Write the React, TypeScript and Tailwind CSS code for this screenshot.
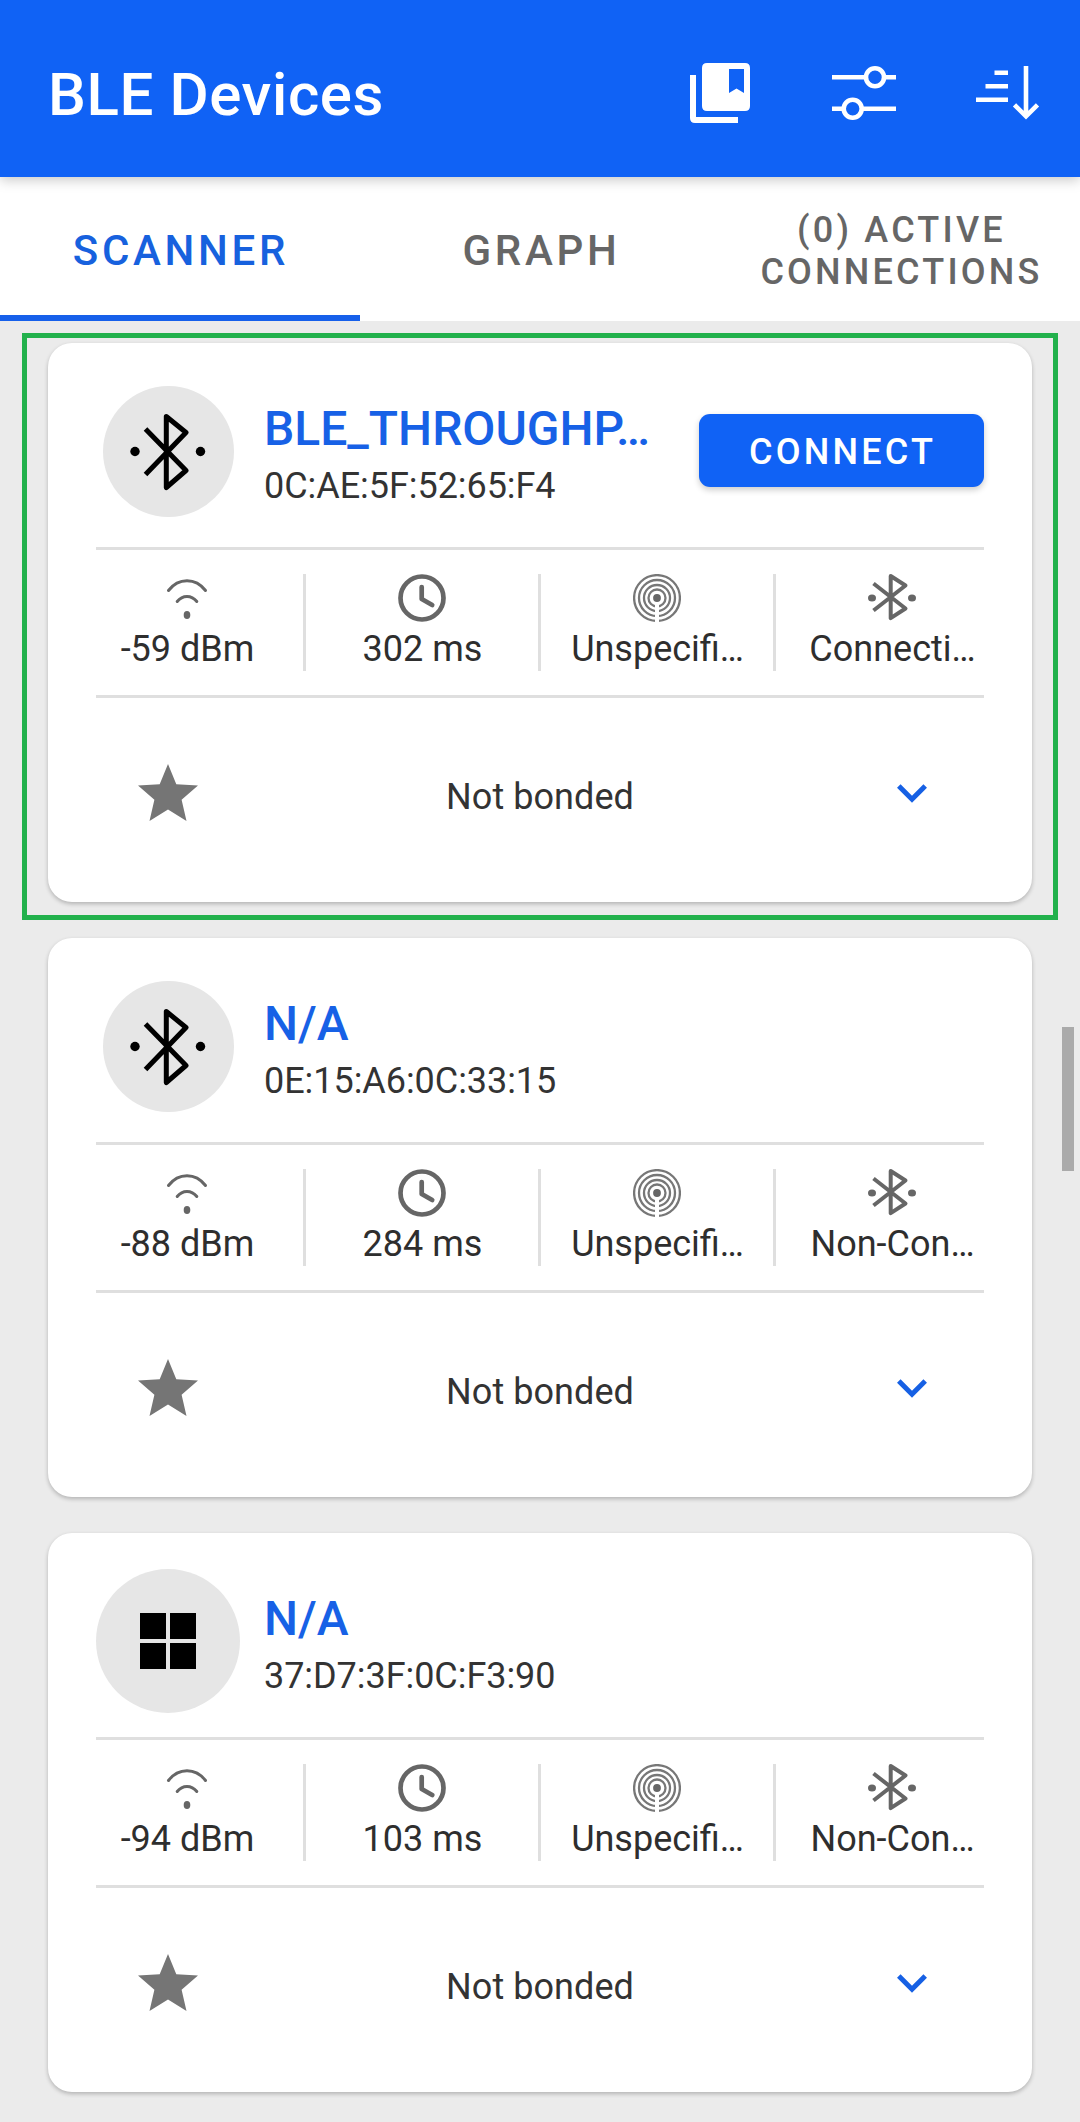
import React from "react";

type Device = {
  name: string;
  address: string;
  rssi: string;
  interval: string;
  kind: string;
  mode: string;
  logo: "ble" | "windows";
  connectable?: boolean;
};

const devices: Device[] = [
  { name: "BLE_THROUGHP…", address: "0C:AE:5F:52:65:F4", rssi: "-59 dBm", interval: "302 ms", kind: "Unspecifi…", mode: "Connecti…", logo: "ble", connectable: true },
  { name: "N/A", address: "0E:15:A6:0C:33:15", rssi: "-88 dBm", interval: "284 ms", kind: "Unspecifi…", mode: "Non-Con…", logo: "ble" },
  { name: "N/A", address: "37:D7:3F:0C:F3:90", rssi: "-94 dBm", interval: "103 ms", kind: "Unspecifi…", mode: "Non-Con…", logo: "windows" },
];

function BookmarksIcon() {
  return (
    <svg width="60" height="60" viewBox="0 0 60 60" fill="#fff">
      <path d="M0 12h6v42h42v6H5q-5 0-5-5z" />
      <path fillRule="evenodd" d="M17 0h38q5 0 5 5v38q0 5-5 5H17q-5 0-5-5V5q0-5 5-5zM39 6v24l7.500-4.500L54 30V6z" />
    </svg>
  );
}

function FilterIcon() {
  return (
    <svg width="64" height="54" viewBox="0 0 64 54" fill="none" stroke="#fff" strokeWidth="4.600">
      <path d="M0 11.300h33M53 11.300h11M0 42.700h11M31 42.700h33" />
      <circle cx="43" cy="11.300" r="9" />
      <circle cx="20.700" cy="42.700" r="9" />
    </svg>
  );
}

function SortIcon() {
  return (
    <svg width="64" height="54" viewBox="0 0 64 54" fill="none" stroke="#fff" strokeWidth="4.600">
      <path d="M18.500 6.700H32M9.500 20.200H32M0 33.800H32M50 0v51M38.500 38.800L50 50.300l11.500-11.500" />
    </svg>
  );
}

function BleLogo() {
  return (
    <svg width="76" height="78" viewBox="0 0 76 78" fill="none" stroke="#000" strokeWidth="5" strokeLinejoin="round">
      <path d="M15.500 16L56 57.500 36.300 74.500V3.500L56 19.500 15.500 61.500" />
      <circle cx="5" cy="38.500" r="4.700" fill="#000" stroke="none" />
      <circle cx="70.500" cy="38.500" r="4.700" fill="#000" stroke="none" />
    </svg>
  );
}

function WindowsLogo() {
  return (
    <svg width="56" height="56" viewBox="0 0 56 56" fill="#000">
      <path d="M0 0h26v26H0zM30 0h26v26H30zM0 30h26v26H0zM30 30h26v26H30z" />
    </svg>
  );
}

function SignalIcon() {
  return (
    <svg width="48" height="48" viewBox="0 0 48 48" fill="none" stroke="#666" strokeWidth="3" strokeLinecap="round">
      <path d="M5.500 16.500C15.500 3.500 32.500 3.500 42.500 16.500" />
      <path d="M14.200 27.500C19.500 20.700 28.500 20.700 33.800 27.500" />
      <ellipse cx="24" cy="41" rx="3.300" ry="4.100" fill="#666" stroke="none" />
    </svg>
  );
}

function ClockIcon() {
  return (
    <svg width="48" height="48" viewBox="0 0 48 48" fill="none" stroke="#666" strokeLinecap="round" strokeLinejoin="round">
      <circle cx="24" cy="24" r="21.500" strokeWidth="4.700" />
      <path d="M23.700 13v12l10.500 6" strokeWidth="4.700" />
    </svg>
  );
}

function BeaconIcon() {
  return (
    <svg width="48" height="48" viewBox="0 0 48 48" fill="none" stroke="#777" strokeWidth="2.300">
      {[22.9, 18, 13, 8.5].map((r) => (
        <circle key={r} cx="24" cy="24" r={r} />
      ))}
      <circle cx="24" cy="24" r="3.900" fill="#666" stroke="none" />
      <path d="M24 29.500V48" stroke="#fff" strokeWidth="4" />
    </svg>
  );
}

function ModeIcon() {
  return (
    <svg width="48" height="48" viewBox="0 0 48 48" fill="none" stroke="#666" strokeWidth="4" strokeLinejoin="round">
      <path d="M5.500 9.500L37.500 34.500 22.700 44.200V2L37.500 11.500 5.500 36.500" />
      <ellipse cx="4" cy="24" rx="4" ry="3.500" fill="#666" stroke="none" />
      <ellipse cx="44" cy="24" rx="4" ry="3.500" fill="#666" stroke="none" />
    </svg>
  );
}

function StarIcon() {
  return (
    <svg width="60" height="57" viewBox="0 0 60 57" fill="#757575">
      <path d="M30 0l8.300 20.200L60 21.500 43.600 35.700 48.500 57 30 45.500 11.500 57l4.900-21.300L0 21.500l21.700-1.300z" />
    </svg>
  );
}

function ChevronIcon() {
  return (
    <svg width="30" height="19" viewBox="0 0 30 19" fill="none" stroke="#1660e4" strokeWidth="5">
      <path d="M1.800 2L15 15.200 28.200 2" />
    </svg>
  );
}

function Stat({ icon, label, last }: { icon: React.ReactNode; label: string; last?: boolean }) {
  return (
    <div className={`flex h-[97px] w-[235px] flex-col items-center border-r-[3px] ${last ? "border-transparent" : "border-[#dfdfdf]"}`}>
      {icon}
      <span className="mt-[6px] pl-px text-[36px] leading-[42px] whitespace-nowrap text-[#2e2e2e]">{label}</span>
    </div>
  );
}

function DeviceCard({ device }: { device: Device }) {
  return (
    <article className="h-[559px] w-[984px] rounded-[24px] bg-white shadow-[0_2px_4px_rgba(0,0,0,0.24)]">
      <div className="flex h-[204px] items-start pr-12">
        <div className="ml-12 flex h-full w-36 shrink-0 justify-center">
          <div className={`flex items-center justify-center rounded-full bg-[#e6e6e6] ${device.logo === "ble" ? "mt-[43px] h-[131px] w-[131px]" : "mt-9 h-36 w-36"}`}>
            {device.logo === "ble" ? <BleLogo /> : <WindowsLogo />}
          </div>
        </div>
        <div className="mt-[58px] ml-6 flex-1 whitespace-nowrap">
          <h2 className="text-[48px] leading-[56px] font-medium text-[#1761e6]">{device.name}</h2>
          <p className="mt-2 text-[36px] leading-[42px] tracking-[-0.05px] text-[#333]">{device.address}</p>
        </div>
        {device.connectable && (
          <button className="mt-[71px] h-[73px] w-[285px] shrink-0 rounded-[11px] bg-[#1062f5] pt-[3px] pl-[2px] text-[36px] leading-[42px] font-medium tracking-[3.2px] text-white shadow-[0_3px_6px_rgba(0,0,0,0.2)]">
            CONNECT
          </button>
        )}
      </div>
      <div className="mx-12 h-[3px] bg-[#dfdfdf]" />
      <div className="ml-[23px] flex h-[145px] pt-6">
        <Stat icon={<SignalIcon />} label={device.rssi} />
        <Stat icon={<ClockIcon />} label={device.interval} />
        <Stat icon={<BeaconIcon />} label={device.kind} />
        <Stat icon={<ModeIcon />} label={device.mode} last />
      </div>
      <div className="mx-12 h-[3px] bg-[#dfdfdf]" />
      <div className="mx-12 mt-[66px] flex h-[57px] items-center">
        <div className="flex w-36 justify-center">
          <StarIcon />
        </div>
        <span className="flex-1 pt-[9px] text-center text-[36px] leading-[42px] tracking-[0.06px] text-[#333]">Not bonded</span>
        <div className="flex w-36 justify-center pt-px">
          <ChevronIcon />
        </div>
      </div>
    </article>
  );
}

export default function App() {
  return (
    <div className="relative flex h-[2122px] w-[1080px] flex-col overflow-hidden bg-[#ebebeb] font-[Roboto,sans-serif]">
      <header className="relative z-10 flex h-[177px] shrink-0 items-center bg-[#1062f5] pl-12 shadow-[0_3px_12px_rgba(0,0,0,0.22)]">
        <h1 className="mt-[13px] flex-1 text-[60px] leading-[70px] font-medium tracking-[0.6px] text-white">BLE Devices</h1>
        <div className="mt-[9px] flex items-center pr-10">
          <BookmarksIcon />
          <div className="ml-[82px]">
            <FilterIcon />
          </div>
          <div className="ml-20">
            <SortIcon />
          </div>
        </div>
      </header>
      <nav className="grid h-36 shrink-0 grid-cols-3 bg-white text-center font-medium text-[#666]">
        <div className="flex items-center justify-center border-b-[6px] border-[#1660ea] pt-2 pl-[2px] text-[42px] tracking-[3.7px] text-[#1761de]">SCANNER</div>
        <div className="flex items-center justify-center pt-[2px] pl-[3px] text-[42px] tracking-[3.7px]">GRAPH</div>
        <div className="flex items-center justify-center pt-1 pl-[3px] text-[36px] leading-[42px] tracking-[3.2px]">
          <span>
            (0) ACTIVE
            <br />
            CONNECTIONS
          </span>
        </div>
      </nav>
      <main className="flex flex-col gap-9 pt-[22px] pl-12">
        {devices.map((device) => (
          <DeviceCard key={device.address} device={device} />
        ))}
      </main>
      <div className="absolute top-[333px] left-[22px] h-[587px] w-[1036px] border-[5px] border-[#22b14c]" />
      <div className="absolute top-[1027px] left-[1062px] h-[144px] w-3 bg-[#aaa]" />
    </div>
  );
}
